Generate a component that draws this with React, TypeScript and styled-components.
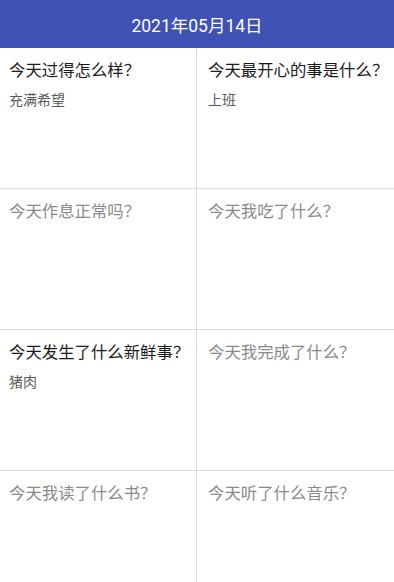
import React from "react";
import styled, { createGlobalStyle } from "styled-components";

interface Entry {
  question: string;
  answer?: string;
}

const entries: Entry[] = [
  { question: "今天过得怎么样？", answer: "充满希望" },
  { question: "今天最开心的事是什么？", answer: "上班" },
  { question: "今天作息正常吗？" },
  { question: "今天我吃了什么？" },
  { question: "今天发生了什么新鲜事？", answer: "猪肉" },
  { question: "今天我完成了什么？" },
  { question: "今天我读了什么书？" },
  { question: "今天听了什么音乐？" },
];

const App = () => {
  return (
    <>
      <GlobalStyle />
      <Page>
        <TopBar>
          <Title>2021年05月14日</Title>
        </TopBar>
        <Grid>
          {entries.map((entry, i) => (
            <Cell key={i} $right={i % 2 === 1}>
              <Question $filled={!!entry.answer}>{entry.question}</Question>
              {entry.answer && <Answer>{entry.answer}</Answer>}
            </Cell>
          ))}
        </Grid>
      </Page>
    </>
  );
};

const GlobalStyle = createGlobalStyle`
  html, body {
    margin: 0;
    padding: 0;
    background: #ffffff;
    font-family: Roboto, "Noto Sans CJK SC", sans-serif;
  }
  * {
    box-sizing: border-box;
  }
`;

const Page = styled.div`
  display: flex;
  flex-direction: column;
  width: 394px;
  height: 582px;
  overflow: hidden;
`;

const TopBar = styled.div`
  display: flex;
  align-items: center;
  justify-content: center;
  height: 48px;
  flex-shrink: 0;
  background: #3f51b5;
`;

const Title = styled.div`
  color: #ffffff;
  font-size: 17.5px;
`;

const Grid = styled.div`
  display: grid;
  grid-template-columns: 197px 197px;
  grid-template-rows: 141px 141px 141px 141px;
`;

const Cell = styled.div<{ $right: boolean }>`
  display: flex;
  flex-direction: column;
  padding: ${(p) => (p.$right ? "11px 6px 0 11px" : "11px 6px 0 9px")};
  border-bottom: 1px solid #dcdcdc;
  border-right: ${(p) => (p.$right ? "none" : "1px solid #dcdcdc")};
`;

const Question = styled.div<{ $filled: boolean }>`
  font-size: 16.4px;
  line-height: 24px;
  color: ${(p) => (p.$filled ? "#1a1a1a" : "#8a8a8a")};
  white-space: nowrap;
`;

const Answer = styled.div`
  margin-top: 7px;
  font-size: 14px;
  line-height: 20px;
  color: #5a5a5a;
`;

export default App;
